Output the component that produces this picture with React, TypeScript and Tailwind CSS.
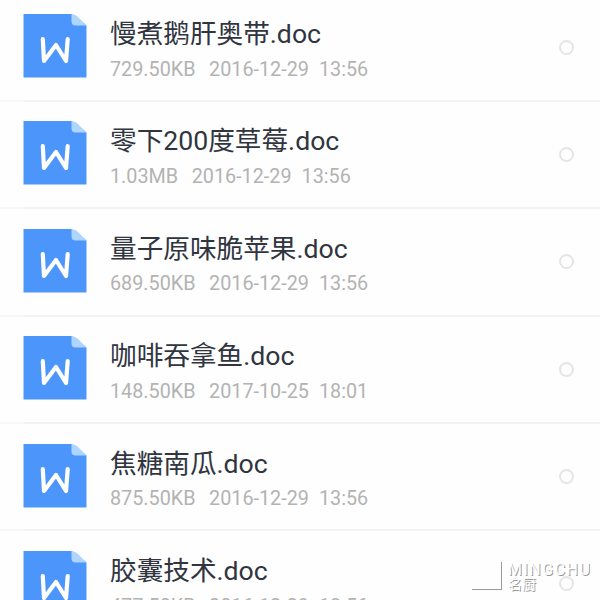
const files = [
  { name: "慢煮鹅肝奥带.doc", size: "729.50KB", date: "2016-12-29", time: "13:56" },
  { name: "零下200度草莓.doc", size: "1.03MB", date: "2016-12-29", time: "13:56" },
  { name: "量子原味脆苹果.doc", size: "689.50KB", date: "2016-12-29", time: "13:56" },
  { name: "咖啡吞拿鱼.doc", size: "148.50KB", date: "2017-10-25", time: "18:01" },
  { name: "焦糖南瓜.doc", size: "875.50KB", date: "2016-12-29", time: "13:56" },
  { name: "胶囊技术.doc", size: "477.50KB", date: "2016-12-29", time: "13:56" },
];

type FileItem = (typeof files)[number];

export default function App() {
  return (
    <div className="relative h-[600px] w-[600px] overflow-hidden bg-[#fefefe] font-['Roboto','Noto_Sans_CJK_SC',sans-serif]">
      {/* File list */}
      <ul className="-mt-[5.5px]">
        {files.map((file) => (
          <FileRow key={file.name} file={file} />
        ))}
      </ul>

      <Watermark />
    </div>
  );
}

function FileRow({ file }: { file: FileItem }) {
  return (
    <li className="flex h-[107.4px] flex-col">
      <div className="flex flex-1 items-start pt-[19.5px] pr-[26px] pl-[23px]">
        <DocIcon />
        <div className="ml-[23px] flex-1 whitespace-nowrap">
          <h3 className="text-[26.65px] leading-[40px] font-normal text-[#30353f]">{file.name}</h3>
          <p className="mt-[0.6px] flex text-[19.8px] leading-[30px] text-[#b3b3b3]">
            <span>{file.size}</span>
            <span className="ml-[13.5px]">{file.date}</span>
            <span className="ml-[10px]">{file.time}</span>
          </p>
        </div>
        <span className="mt-[25.5px] size-[15px] rounded-full border-2 border-[#e5e5e5]" />
      </div>
      <div className="flex h-[2px]">
        <span className="w-6 bg-[#f8f8f8]" />
        <span className="flex-1 bg-[#f2f2f2]" />
      </div>
    </li>
  );
}

function DocIcon() {
  return (
    <svg className="size-16 shrink-0" viewBox="0 0 64 64" fill="none">
      <path d="M.5 0H48.5L63.5 11.5V63.5H.5Z" fill="#4c95fb" />
      <path d="M48.5 0Q53 .5 56 4L60 8Q63 10 63.5 11.5H52.5Q48.5 11.5 48.5 7.5Z" fill="#add5fd" />
      <path
        d="M19.8 25.2L21 47L33 31L43 47L44.7 25.2"
        stroke="#fff"
        strokeWidth="4.2"
        strokeLinecap="round"
        strokeLinejoin="round"
      />
    </svg>
  );
}

function Watermark() {
  return (
    <div className="absolute top-[562px] left-[472px] flex text-white [text-shadow:1px_1px_0.5px_#999]">
      <span className="h-[28px] w-[30px] border-r border-b border-[#999]" />
      <div className="ml-[6px] whitespace-nowrap">
        <p className="text-[16px] leading-[15px] tracking-[1.5px]">MINGCHU</p>
        <p className="text-[14px] leading-[15px]">名厨</p>
      </div>
    </div>
  );
}
